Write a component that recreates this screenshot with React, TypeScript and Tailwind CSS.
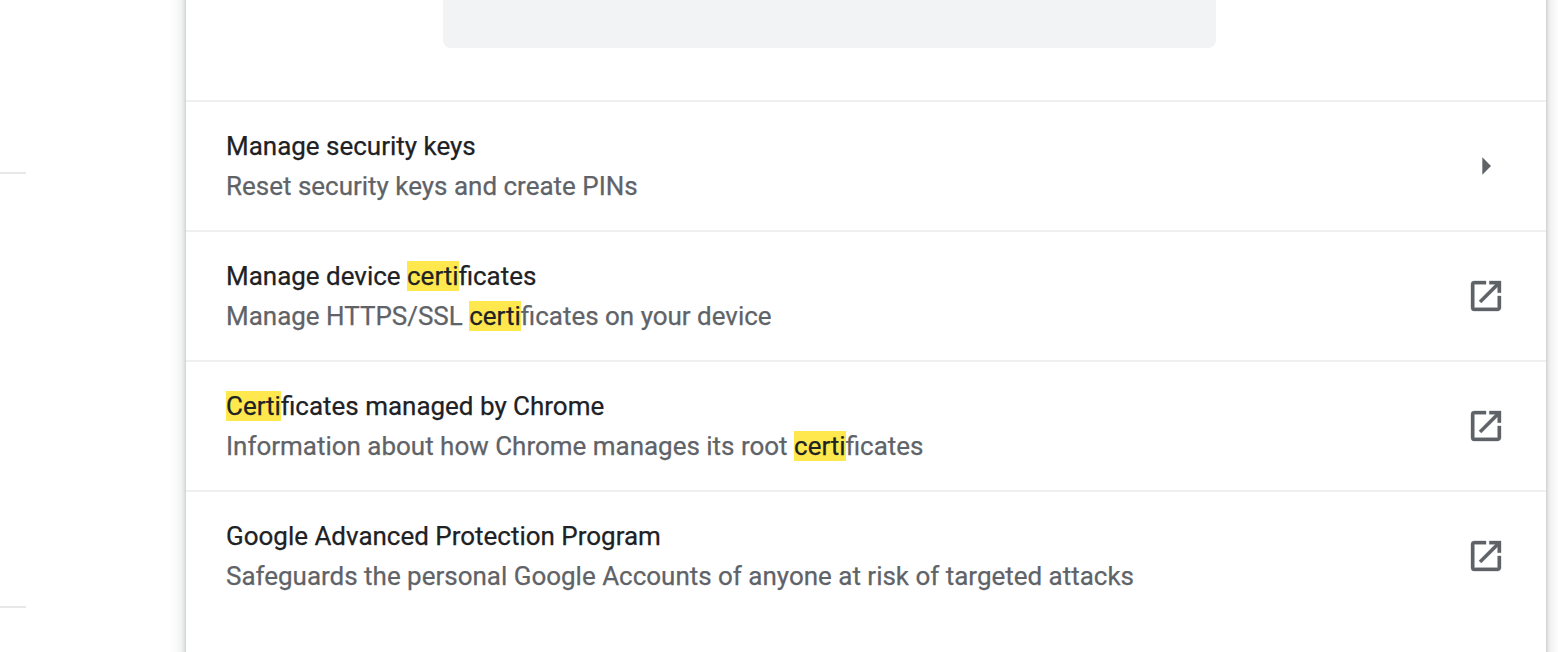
import type { ReactNode } from "react";

function Mark({ children }: { children: ReactNode }) {
  return <mark className="bg-[#ffe84d] text-[#202124]">{children}</mark>;
}

function OpenIcon() {
  return (
    <svg className="size-10 shrink-0 fill-[#5f6368] stroke-[#5f6368] stroke-[0.2]" viewBox="0 0 24 24">
      <path d="M19 19H5V5h7V3H5a2 2 0 0 0-2 2v14a2 2 0 0 0 2 2h14c1.100 0 2-.9 2-2v-7h-2v7zM14 3v2h3.590l-9.830 9.830 1.410 1.410L19 6.410V10h2V3h-7z" />
    </svg>
  );
}

function ArrowIcon() {
  return (
    <svg className="size-10 shrink-0 fill-[#5f6368]" viewBox="0 0 24 24">
      <path d="M9.800 6.800l5.200 5.200-5.200 5.200z" />
    </svg>
  );
}

function Row({ title, detail, icon }: { title: ReactNode; detail: ReactNode; icon: ReactNode }) {
  return (
    <div className="flex h-[130px] items-center justify-between border-t-2 border-[#efefef] pl-10 pr-10">
      <div className="text-[25.98px] leading-10 whitespace-nowrap [-webkit-text-stroke-width:0.25px]">
        <div className="text-[#202124]">{title}</div>
        <div className="text-[#5f6368]">{detail}</div>
      </div>
      {icon}
    </div>
  );
}

export default function App() {
  return (
    <div className="flex h-[652px] w-[1558px] overflow-hidden bg-white font-['Roboto',sans-serif]">
      <aside className="w-[186px] shrink-0 pt-[172px]">
        <div className="h-[436px] w-[26px] border-y-2 border-[#e8e8e8]" />
      </aside>
      <main className="-mt-10 h-[732px] w-[1360px] shrink-0 pt-10 shadow-[0_2px_4px_rgba(60,64,67,0.3),0_4px_12px_4px_rgba(60,64,67,0.15)]">
        <div className="h-[100px] pl-[257px]">
          <div className="h-12 w-[773px] rounded-b-lg bg-[#f1f3f4]" />
        </div>
        <Row title="Manage security keys" detail="Reset security keys and create PINs" icon={<ArrowIcon />} />
        <Row
          title={<>Manage device <Mark>certi</Mark>ficates</>}
          detail={<>Manage HTTPS/SSL <Mark>certi</Mark>ficates on your device</>}
          icon={<OpenIcon />}
        />
        <Row
          title={<><Mark>Certi</Mark>ficates managed by Chrome</>}
          detail={<>Information about how Chrome manages its root <Mark>certi</Mark>ficates</>}
          icon={<OpenIcon />}
        />
        <Row
          title="Google Advanced Protection Program"
          detail="Safeguards the personal Google Accounts of anyone at risk of targeted attacks"
          icon={<OpenIcon />}
        />
      </main>
    </div>
  );
}
